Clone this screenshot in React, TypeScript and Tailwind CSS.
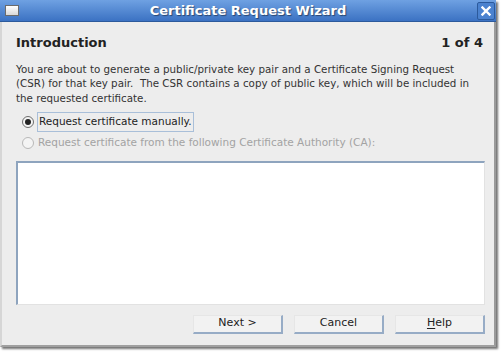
import { useState } from "react";

function Radio({ checked, disabled }: { checked?: boolean; disabled?: boolean }) {
  return (
    <span
      className={`flex h-[12px] w-[12px] shrink-0 items-center justify-center rounded-full border bg-[#f4f4f4] ${
        disabled ? "border-[#b8b8b8]" : "border-[#6e6e6e]"
      }`}
    >
      {checked && <span className="h-[6px] w-[6px] rounded-full bg-[#222]" />}
    </span>
  );
}

function WizButton({ children }: { children: React.ReactNode }) {
  return (
    <button className="flex h-[19px] w-[90px] items-center justify-center border-b-2 border-r-2 border-l border-t border-b-[#97acc6] border-r-[#97acc6] border-l-[#e6e6e6] border-t-[#e6e6e6] bg-[#f2f2f2] text-[11px] text-[#222]">
      {children}
    </button>
  );
}

export default function App() {
  const [manual] = useState(true);

  return (
    <div
      className="h-[353px] w-[501px] overflow-hidden bg-white"
      style={{ fontFamily: '"DejaVu Sans", sans-serif' }}
    >
      <div className="flex h-[347px] w-[496px] flex-col shadow-[2px_2px_2px_rgba(0,0,0,0.55)]">
        {/* Title bar */}
        <div className="relative flex h-[22px] shrink-0 items-center justify-center border-b border-b-[#2c5a9c] bg-gradient-to-b from-[#6fa1e2] to-[#3b72c3]">
          <span className="absolute left-[5px] top-[5px] h-[11px] w-[14px] border border-[#6b6b6b] bg-gradient-to-b from-white to-[#d8d8d8]" />
          <span className="text-[13px] font-bold text-white [text-shadow:1px_1px_1px_rgba(0,0,0,0.45)]">
            Certificate Request Wizard
          </span>
          <span className="absolute right-[1px] top-[2px] flex h-[18px] w-[18px] items-center justify-center rounded-[2px] border border-[#2c5a9c] bg-[#4b82cf]">
            <svg width="10" height="10" viewBox="0 0 10 10">
              <path d="M1.5 1.5 L8.5 8.5 M8.5 1.5 L1.5 8.5" stroke="white" strokeWidth="2.4" strokeLinecap="square" />
            </svg>
          </span>
        </div>

        {/* Body */}
        <div className="flex flex-1 flex-col border-l-2 border-r-2 border-b-2 border-l-[#d6d6d6] border-r-[#9a9a9a] border-b-[#a0a0a0] bg-[#ededed] pl-[14px] pr-[9px]">
          <div className="mt-[11px] flex items-center justify-between pr-[2px]">
            <span className="text-[13px] font-bold text-[#222]">Introduction</span>
            <span className="text-[13px] font-bold text-[#222]">1 of 4</span>
          </div>

          <p className="mt-[9px] text-[10.3px] leading-[14.5px] text-[#333]">
            You are about to generate a public/private key pair and a Certificate Signing Request
            (CSR) for that key pair.&nbsp; The CSR contains a copy of public key, which will be included in
            the requested certificate.
          </p>

          <div className="mt-[7px] flex items-center gap-[3px] pl-[6px]">
            <Radio checked={manual} />
            <span className="border border-[#a9bfd9] px-[1px] py-[1px] text-[10.5px] text-[#222]">
              Request certificate manually.
            </span>
          </div>
          <div className="mt-[3px] flex items-center gap-[4px] pl-[6px]">
            <Radio disabled />
            <span className="text-[10.5px] text-[#a3a3a3]">
              Request certificate from the following Certificate Authority (CA):
            </span>
          </div>

          <div className="mt-[10px] h-[144px] border-l-2 border-t-2 border-b border-r border-l-[#8ea4be] border-t-[#8ea4be] border-b-[#e2e2e2] border-r-[#e2e2e2] bg-white" />

          <div className="mt-[10px] flex justify-end gap-[11px]">
            <WizButton>Next &gt;</WizButton>
            <WizButton>Cancel</WizButton>
            <WizButton>
              <span className="underline underline-offset-2">H</span>elp
            </WizButton>
          </div>
        </div>
      </div>
    </div>
  );
}
